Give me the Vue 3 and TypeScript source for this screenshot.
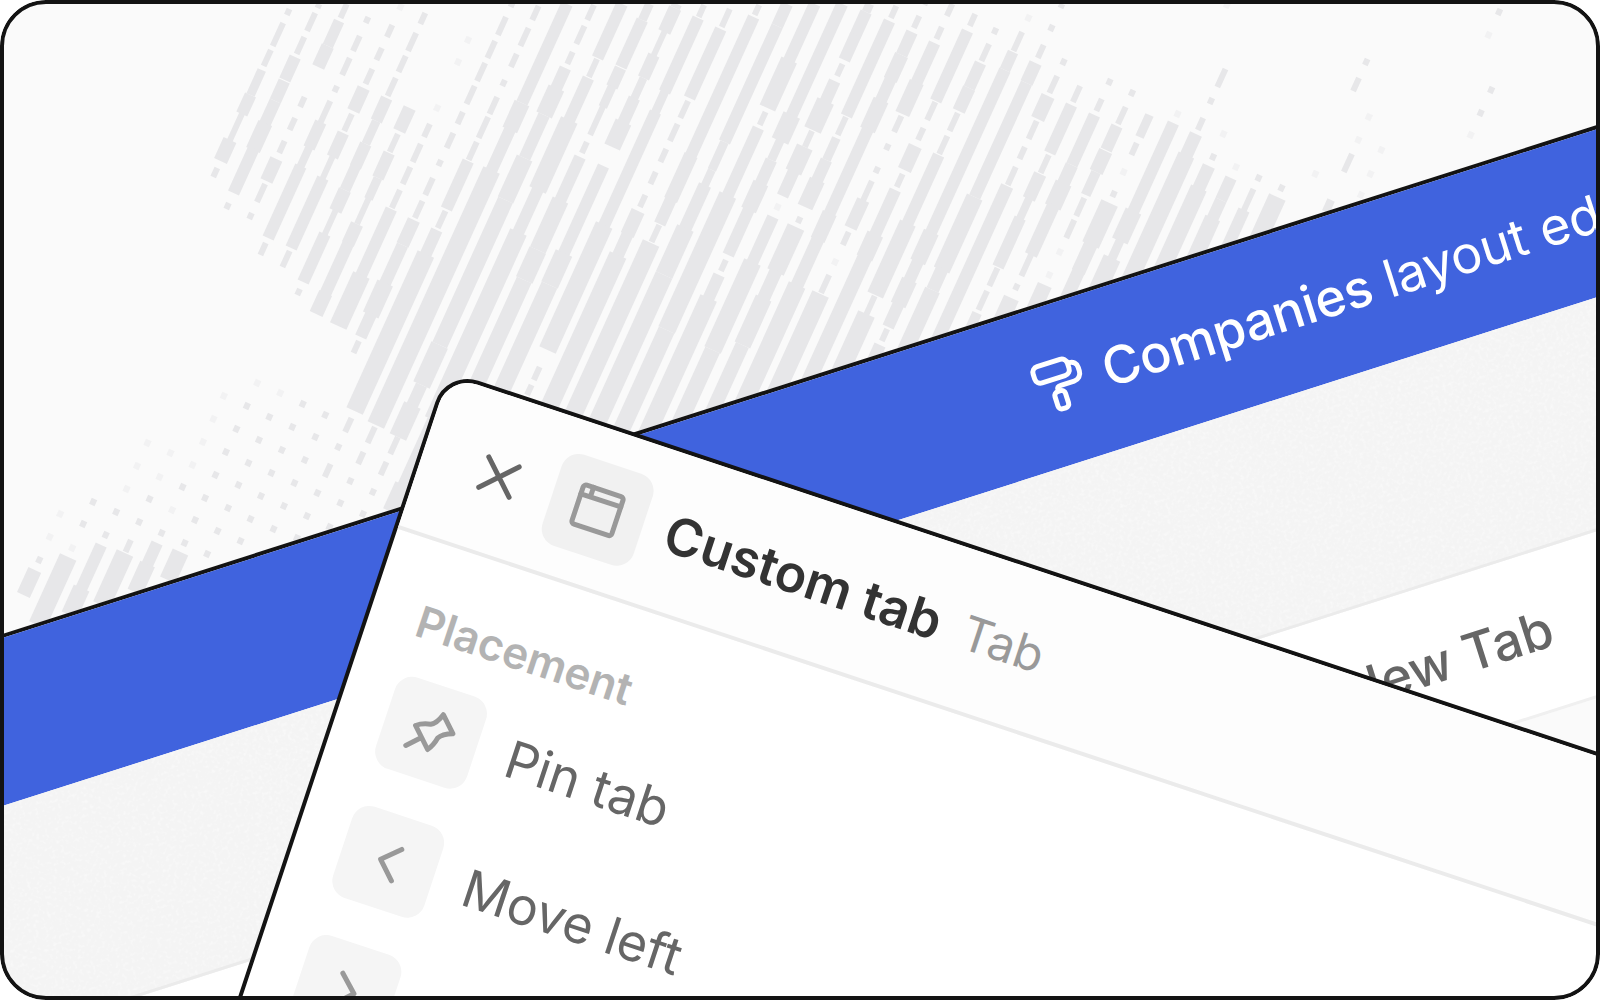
<script setup lang="ts">
interface Bar {
  d: string
  w: number
  faint: boolean
}

// Each column of the map runs down and to the left. A mark is "from-to" (vertical
// extent), with ":width" for a bar thicker than a dash. A lone number is a dot, and
// an "f" in front makes it faint.
const columns: Record<number, string> = {
  10: '12 23-46 50-66 70-95:9 95-114:12 113-141 140-161:14 168-177 f514 f537 560 570-595:14',
  11: '4-8 13-31 37-54 57-80:12 81-101:12 101-126:12 123-150:15 148-193:12 206 502 524 f548 557-625:18',
  12: '4-18 21-46:11 46-67:13 97-107 118-130 141-153 159-181:13 184-202 216 f443 f466 f489 512 535 545-590:12 588-615:17',
  13: '20 36-51 58-75 89 101-123 122-148:12 147-167:8 166-238:12 243-255 f453 f477 499 522 540-552 553-605:18',
  14: 'f7 25-37 48-60 69-84 88-111:13 114-131 133-157:12 156-179 178-248:12 251-267 f396 f419 f442 f465 487 f510 533 543-567:12 564-592:16',
  15: '13-24 33-51 56-72 78-96 98-121:12 121-144:9 144-167:12 166-190:11 190-211:13 210-235 234-282:12 292 f383 406 429 452 475 498 520 543 552-580:17',
  16: '108-131:13 134-152 153-178:12 178-199:9 198-224 224-244:13 243-294:12 293-314:14 f393 417 440 463 485 508 531 554',
  17: 'f40 f62 f108 124-137 144-162 167-184 190-208 209-281:12 275-326:18 404 427 450 473 496 519 541',
  18: '3-7 17-35 41-58 63-81 86-104 112-124 133-148 163 178-195 201-218 220-245:13 245-285:12 283-315:17 313-337:12 341-353 415 437 460 483 506 529',
  19: '6-20 28-46 54-67 83 97-114 117-138 142-160 161-209:12 211-228 230-256:12 254-411:18 418-432 447 464-477 493 516 538',
  20: '4-103:12 103-130:16 128-172:12 170-425:18 427-443 452-464 481 503 527',
  21: '5-20 26-44 52-64 68-92:12 88-115:17 115-158:12 158-200:17 200-345:16 345-385:18 385-408:12 405-437:18 437-454 462-475 492 514',
  22: '4-58:12 59-77 78-122:12 120-190:18 188-235:12 232-420:18 420-487:12 485-512:18',
  23: '4-20:9 20-67:12 68-87:12 86-107:9 106-135 142-153 157-202:12 200-250:17 250-280:18 280-400:16',
  24: '4-8:10 8-32:13 31-57 55-78:12 78-100:8 98-124:12 122-147:17 166-255:12 253-285:18 285-405:17',
  25: '5-17 18-92:12 90-115:9 112-228:12 225-350:18 367-380 385-395',
  26: '9-27 29-98:12 101-118 124-141 149-162 172-184 195-207 211-235:14 233-258:12 255-420:18',
  27: '5-15 17-160:12 155-200:14 198-224:12 225-242 243-430:18',
  28: '4-26:12 26-142:12 142-170:9 170-192:8 185-230:13 228-275:18 275-440:18',
  29: '4-62:12 60-108:17 112-125 128-198:12 195-330:18 330-440:17',
  30: '4-120:12 115-141:18 140-160:9 160-185:12 183-210:16 208-255:12 260-271 275-300:12 298-440:18',
  31: '4-12:9 12-36:12 35-60:12 64-76 81-102:12 101-130:18 131-147 147-172:17 170-196:12 f207 217-265:12 262-350:18 350-440:16',
  32: '6-18 21-116:12 117-135 138-160:9 160-182:12 180-207:16 220 227-272:18 270-300:13 298-345:17 345-430:14',
  33: '3-5 16-28 32-55:12 55-80:14 78-103:12 100-130:16 128-215:12 213-240:15 238-290:13 285-425:18',
  34: '4-16 27-39 43-85:12 82-114:15 116-132 147 170 181-202 200-228:13 232-245 f262 275-293 294-420:18',
  35: '14-26 31-101:12 102-120 128-140 146-170:14 174-187 190-237:12 234-258:17 256-410:15',
  36: '31 44-61 63-88:12 88-111:13 113-131 136-154 155-225:12 223-295:17 296-315 314-400:18',
  37: 'f18 32-51 52-70:11 70-235:12 232-262:16 258-285:12 280-305:16 303-327:12 329-341 345-400:12',
  38: '4-8 28 45-58 63-83:13 83-178:12 177-197:12 197-270:17 268-290:13 290-370:16',
  39: '62 76-93 96-119:14 121-139 147-159 167-185 186-370:13',
  40: '86-102 105-153:12 155-173 174-199:13 198-220:8 218-267:12 268-286 291-310 313-335:10',
  41: '82 99-111 115-165:12 165-187:13 183-207:17 205-255:13 253-276 287 298-330:16',
  42: '93 107-124 126-150:12 151-172:14 172-195:10 198-216 220-238 f252 f275 285-320:15',
  43: '115-137:9 143-155 f172 194 203-245:18 243-272:14 270-310:13',
  44: 'f5 f114 123-213:12 211-241:17 240-263:9 258-300:18',
  45: '69-87 101 118-130 134-157:13 155-290:17',
  46: 'f134 157 166-190:13 188-280:17',
  47: 'f167 178-200:12 200-220:12 218-265:16',
  48: '178 189-212 210-250:12',
  49: '188 197-240:18',
  50: '62 78-91 f174',
  51: 'f117 f140 154-172 200-212:8',
  52: 'f150 f174 f195',
  54: '12 f35',
  55: '90 113 f135',
}

const xAt = (column: number, y: number): string => (27.52 * column + 18.4 - 0.4541 * y).toFixed(1)

const bars: Bar[] = Object.entries(columns).flatMap(([key, marks]) =>
  marks.split(' ').map((mark) => {
    const faint = mark.startsWith('f')
    const [range, width] = mark.replace('f', '').split(':')
    const ends = range.split('-').map(Number)
    const [from, to] = ends.length === 2 ? ends : [ends[0] - 3, ends[0] + 3]
    const column = Number(key)
    return {
      d: `M${xAt(column, from)} ${from}L${xAt(column, to)} ${to}`,
      w: width ? Number(width) : 6,
      faint,
    }
  }),
)
</script>

<template>
  <main class="stage">
    <svg class="map" aria-hidden="true">
      <path
        v-for="(bar, i) in bars"
        :key="i"
        :d="bar.d"
        :stroke-width="bar.w"
        :class="{ faint: bar.faint }"
      />
    </svg>

    <section class="editor">
      <header class="banner">
        <svg class="roller" viewBox="0 0 50 52" aria-hidden="true">
          <rect x="2" y="2" width="36" height="17" rx="6" />
          <path d="M38 8h2a7 7 0 0 1 7 7v4a8 8 0 0 1-8 8H25q-4 0-4 3v2" />
          <rect x="16" y="32" width="11" height="18" rx="4" />
        </svg>
        <p class="banner-text"><strong>Companies</strong> layout editor</p>
      </header>
      <div class="toolbar">
        <svg class="grain" aria-hidden="true">
          <filter id="grain">
            <feTurbulence type="fractalNoise" baseFrequency="0.3" numOctaves="2" />
            <feColorMatrix values="0 0 0 0 1  0 0 0 0 1  0 0 0 0 1  3 0 0 0 -1.4" />
          </filter>
          <rect width="100%" height="100%" filter="url(#grain)" />
        </svg>
      </div>
      <nav class="tabs">
        <button class="tab" type="button">New Tab</button>
      </nav>
    </section>

    <section class="panel">
      <header class="panel-head">
        <button class="close" type="button" aria-label="Close">
          <svg class="cross" viewBox="0 0 40 40" aria-hidden="true">
            <path d="M4 4l32 32M36 4L4 36" />
          </svg>
        </button>
        <span class="tile tile-head">
          <svg class="glyph" viewBox="-30 -30 60 60" aria-hidden="true">
            <rect x="-21" y="-20" width="42" height="41" rx="3" />
            <path d="M-21-10h42M-11-20v10" />
          </svg>
        </span>
        <h1 class="title">Custom tab</h1>
        <span class="kind">Tab</span>
      </header>
      <div class="panel-body">
        <h2 class="group">Placement</h2>
        <button class="item" type="button">
          <span class="tile">
            <svg class="glyph" viewBox="-30 -30 60 60" aria-hidden="true">
              <path d="M-17-2C-12-6-8-7-3-8C1-10 4-15 6-21L21-6C15-4 10-1 8 3C7 8 6 12 2 17ZM-8 8L-20 20" />
            </svg>
          </span>
          Pin tab
        </button>
        <button class="item" type="button">
          <span class="tile">
            <svg class="glyph" viewBox="-30 -30 60 60" aria-hidden="true">
              <path d="M9-16L-8 0L9 17" />
            </svg>
          </span>
          Move left
        </button>
        <button class="item" type="button" aria-label="Move right">
          <span class="tile">
            <svg class="glyph" viewBox="-30 -30 60 60" aria-hidden="true">
              <path d="M-8-16L9 0L-8 17" />
            </svg>
          </span>
        </button>
      </div>
    </section>
  </main>
</template>

<style>
body {
  margin: 0;
  background: #fff;
}
</style>

<style scoped>
.stage {
  position: relative;
  height: 100vh;
  overflow: hidden;
  border-radius: 46px;
  background: #fafafa;
  font-family: Inter, "Liberation Sans", sans-serif;
}

.stage::after {
  content: "";
  position: absolute;
  inset: 0;
  border: 4px solid #131313;
  border-radius: 46px;
  pointer-events: none;
}

button {
  margin: 0;
  padding: 0;
  border: 0;
  background: none;
  font: inherit;
  color: inherit;
}

.map {
  display: block;
  width: 100%;
  height: 100%;
  fill: none;
  stroke: #e7e7e9;
}

.faint {
  opacity: 0.4;
}

/* Layout editor window, tilted up to the right */
.editor {
  position: absolute;
  left: -92px;
  top: 664px;
  width: 125vw;
  border-top: 4px solid #131313;
  background: #fff;
  transform: rotate(-17.7deg);
  transform-origin: 0 0;
  font-size: 52px;
  line-height: 60px;
}

.banner {
  display: flex;
  align-items: center;
  gap: 20px;
  height: 160px;
  padding-left: 1158px;
  background: #4063de;
  color: #fff;
}

.roller {
  width: 50px;
  height: 52px;
  flex: none;
  fill: none;
  stroke: currentColor;
  stroke-width: 5;
  overflow: visible;
}

.banner-text {
  margin: 0;
  white-space: nowrap;
}

.banner-text strong {
  font-weight: 500;
}

.toolbar {
  height: 220px;
  border-bottom: 3px solid #ebebeb;
  background: #f4f4f4;
}

.grain {
  display: block;
  width: 100%;
  height: 100%;
  opacity: 0.4;
}

.tabs {
  display: flex;
  align-items: center;
  height: 156px;
  padding-left: 1359px;
  border-bottom: 3px solid #f0f0f0;
}

.tab {
  font-weight: 500;
  color: #666;
  white-space: nowrap;
}

/* Tab settings panel, tilted down to the right */
.panel {
  position: absolute;
  left: 446px;
  top: 370px;
  width: 125vw;
  height: 125vh;
  box-sizing: border-box;
  overflow: hidden;
  border: 4px solid #131313;
  border-radius: 34px;
  background: #fff;
  transform: rotate(18.35deg);
  transform-origin: 0 0;
  line-height: 60px;
}

.panel-head {
  display: flex;
  align-items: center;
  height: 154px;
  padding: 4px 0 0 60px;
  border-bottom: 4px solid #ebebeb;
  background: #fdfdfd;
}

.close {
  display: flex;
  margin-right: 36px;
}

.cross {
  width: 40px;
  height: 40px;
  fill: none;
  stroke: #666;
  stroke-width: 5;
  stroke-linecap: round;
}

.tile {
  display: flex;
  align-items: center;
  justify-content: center;
  width: 96px;
  height: 96px;
  flex: none;
  border-radius: 18px;
  background: #f5f5f5;
}

.tile-head {
  background: #f1f1f1;
}

.glyph {
  width: 60px;
  height: 60px;
  fill: none;
  stroke: #999;
  stroke-width: 5;
  stroke-linecap: round;
  stroke-linejoin: round;
}

.title {
  margin: 0 24px;
  font-size: 52px;
  font-weight: 600;
  color: #333;
  white-space: nowrap;
}

.kind {
  font-size: 48px;
  color: #999;
}

.panel-body {
  display: flex;
  flex-direction: column;
  gap: 40px;
  padding: 50px 48px;
}

.group {
  margin: 0 0 -15px;
  font-size: 44px;
  font-weight: 600;
  color: #b3b3b3;
}

.item {
  display: flex;
  align-items: center;
  gap: 32px;
  font-size: 52px;
  color: #666;
  text-align: left;
}
</style>
